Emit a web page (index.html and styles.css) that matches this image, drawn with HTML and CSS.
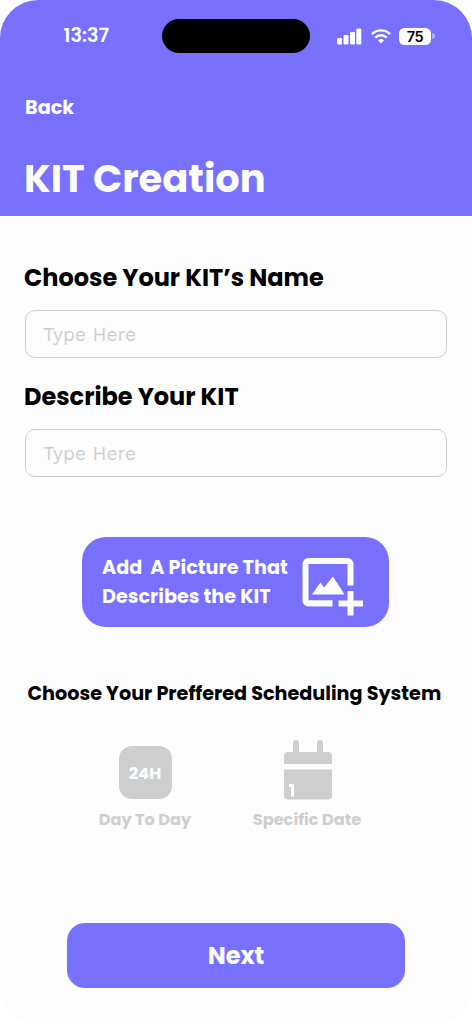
FILE: index.html
```html
<!DOCTYPE html>
<html lang="en">
<head>
<meta charset="utf-8">
<title>KIT Creation</title>
<link rel="stylesheet" href="styles.css">
</head>
<body>
<div class="screen">
  <header class="header">
    <div class="status">
      <span class="time">13:37</span>
      <span class="island"></span>
      <svg class="signal" width="25" height="17" viewBox="0 0 25 17" fill="#fdfdfd"><rect x="0" y="10" width="5" height="6.500" rx="1.200"/><rect x="6.500" y="7" width="5" height="9.500" rx="1.200"/><rect x="13" y="4" width="5" height="12.500" rx="1.200"/><rect x="19.300" y="0.500" width="5" height="16" rx="1.200"/></svg>
      <svg class="wifi" width="20" height="15" viewBox="0 0 20 15" fill="none" stroke="#fdfdfd" stroke-width="2.300"><path d="M.9 5.100a13 13 0 0 1 18.200 0M4.200 8.600a8.300 8.300 0 0 1 11.600 0"/><path d="M10 14.400 7.100 11.500a4.100 4.100 0 0 1 5.800 0Z" fill="#fdfdfd" stroke="none"/></svg>
      <span class="battery">75</span><span class="battery-tip"></span>
    </div>
    <a class="back">Back</a>
    <h1 class="title">KIT Creation</h1>
  </header>
  <main class="form">
    <label class="label label-name">Choose Your KIT’s Name</label>
    <div class="field">Type Here</div>
    <label class="label label-desc">Describe Your KIT</label>
    <div class="field">Type Here</div>
    <div class="picture">
      <div class="picture-text"><div>Add&nbsp; A Picture That</div><div>Describes the KIT</div></div>
      <svg class="picture-icon" width="62" height="60" viewBox="0 0 62 60" fill="#fdfdfd"><path d="M6.500 1H45.500a6 6 0 0 1 6 6V28.500H45.500V7H6.500V43.300H30.500V49.500H6.500a6 6 0 0 1-6-6V7a6 6 0 0 1 6-6Z"/><path d="M10 37.500 18.500 25.500 22 30.500 31 19.500 42.500 37.500Z"/><path d="M45.500 34H51.500V43.500H61V49.500H51.500V58.500H45.500V49.500H36.500V43.500H45.500Z"/></svg>
    </div>
    <h2 class="subtitle">Choose Your Preffered Scheduling System</h2>
    <div class="options">
      <div class="option day">
        <div class="icon-slot"><span class="hours">24H</span></div>
        <div class="caption">Day To Day</div>
      </div>
      <div class="option date">
        <div class="icon-slot"><svg width="48" height="60" viewBox="0 0 48 60" fill="#cecece"><path d="M0 24V16a4 4 0 0 1 4-4H9V3a3 3 0 0 1 6 0V12H33V3a3 3 0 0 1 6 0V12h5a4 4 0 0 1 4 4V24ZM0 29.500H48V56a3.500 3.500 0 0 1-3.500 3.500H3.500A3.500 3.500 0 0 1 0 56Z"/><path d="M5 44H10V56.500H7V47H5Z" fill="#fdfdfd"/></svg></div>
        <div class="caption">Specific Date</div>
      </div>
    </div>
    <div class="next">Next</div>
  </main>
</div>
</body>
</html>
```
FILE: styles.css
```css
* { box-sizing: border-box; }
body { margin: 0; background: #fff; font-family: Poppins, Inter, sans-serif; font-weight: 700; }
.screen { width: 472px; height: 1024px; border-radius: 38px; overflow: hidden; background: #fdfdfd; white-space: nowrap; }
.header { height: 216px; background: #7870ff; color: #fdfdfd; padding-top: 19px; }
.status { display: flex; height: 34px; align-items: center; }
.time { width: 98.500px; margin-left: 63.500px; font-size: 19.200px; font-weight: 600; line-height: 34px; }
.island { width: 148px; height: 34px; border-radius: 17px; background: #000; }
.signal { margin: 0 0 0 27px; }
.wifi { margin-left: 9px; }
.battery { width: 32px; height: 17px; margin-left: 8px; border-radius: 5.500px; background: #fdfdfd; color: #000; font-family: Inter, sans-serif; font-size: 14.500px; font-weight: 600; line-height: 17px; text-align: center; letter-spacing: -0.3px; }
.battery-tip { width: 3px; height: 6px; margin-left: 1px; border-radius: 0 3px 3px 0; background: #b5b1e8; }
.back { display: block; margin: 43px 0 0 25px; font-size: 19.200px; line-height: 24px; }
.title { margin: 35px 0 0 24px; font-size: 38.400px; line-height: 48px; }
.form { display: flex; flex-direction: column; padding: 0 25px; }
.label { margin-left: -1px; font-size: 24px; line-height: 30px; color: #000; }
.label-name { margin-top: 47px; }
.label-desc { margin-top: 24px; }
.field { height: 48px; margin-top: 17px; padding-left: 17px; border: 1px solid #cecece; border-radius: 10px; color: #cecece; font-family: "Work Sans", Inter, sans-serif; font-size: 19.200px; font-weight: 400; line-height: 47px; }
.picture { display: flex; width: 307px; height: 90px; margin: 60px 0 0 57px; padding: 16px 0 0 20px; border-radius: 24px; background: #7870ff; color: #fdfdfd; font-size: 19.200px; line-height: 29px; }
.picture-text { width: 200px; }
.picture-icon { margin-top: 4px; }
.subtitle { margin: 53px 0 0 2.500px; font-size: 19.200px; line-height: 28px; color: #000; }
.options { display: flex; margin-top: 32px; color: #cecece; font-size: 16.200px; }
.option { display: flex; flex-direction: column; align-items: center; }
.day { width: 94px; margin-left: 73px; }
.date { width: 110px; margin-left: 60px; }
.date svg { margin-left: 1px; }
.icon-slot { display: flex; height: 60px; align-items: flex-end; }
.hours { width: 53px; height: 53px; margin-bottom: 1px; border-radius: 13px; background: #cecece; color: #fdfdfd; font-size: 16.500px; line-height: 55px; text-align: center; }
.caption { margin-top: 8px; line-height: 24px; }
.next { width: 338px; height: 65px; margin: 91px 0 0 42px; border-radius: 18px; background: #7870ff; color: #fdfdfd; font-size: 24px; line-height: 65px; text-align: center; }
```
